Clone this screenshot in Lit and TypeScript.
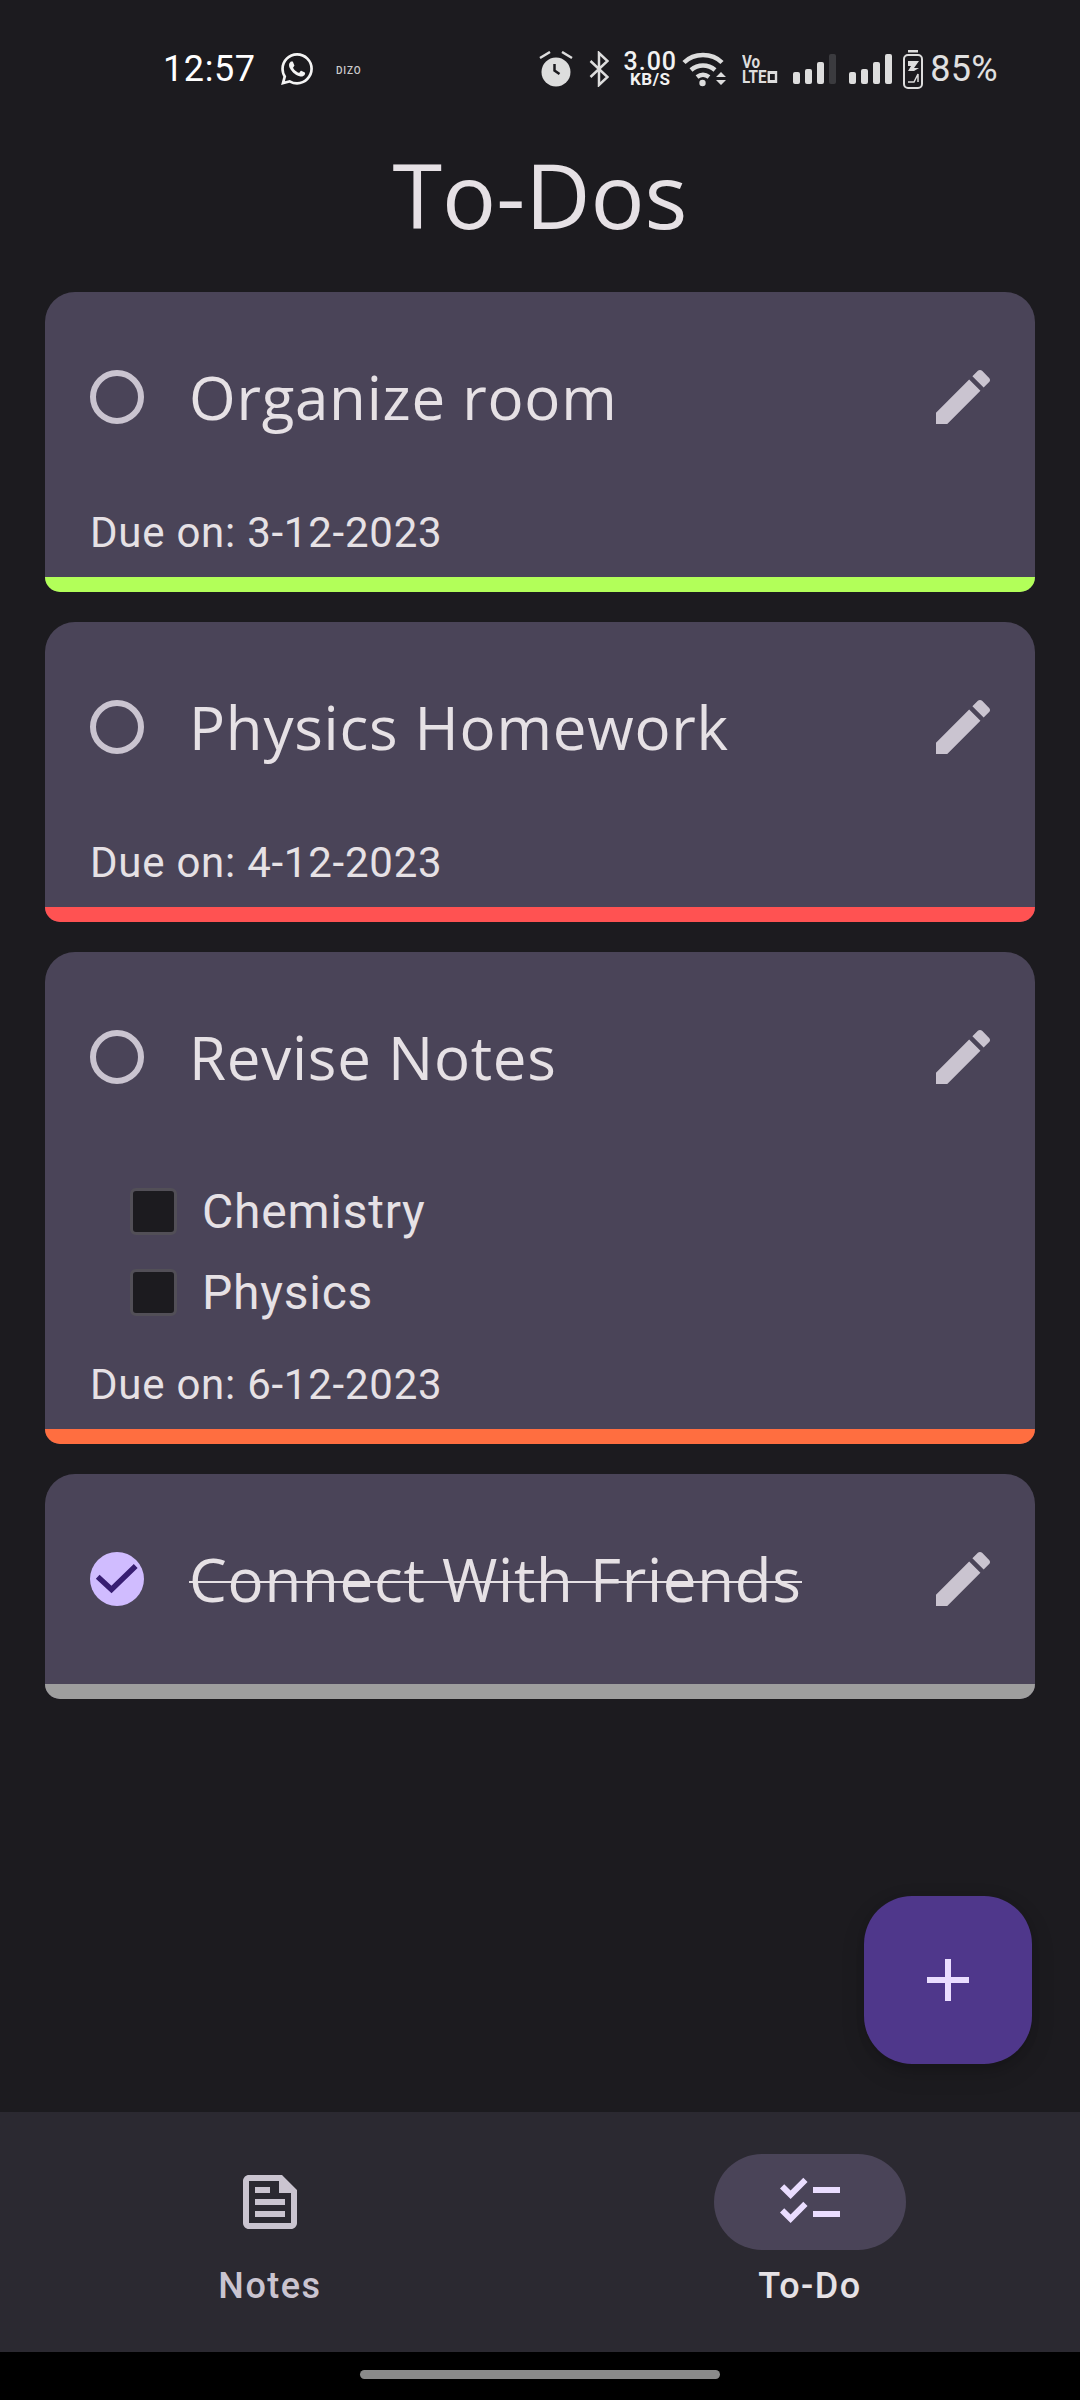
import { LitElement, html, svg, css, nothing } from 'lit';
import { customElement } from 'lit/decorators.js';

interface Todo {
  title: string;
  due?: string;
  color: string;
  done?: boolean;
  subtasks?: string[];
}

const todos: Todo[] = [
  { title: 'Organize room', due: '3-12-2023', color: '#b2ff59' },
  { title: 'Physics Homework', due: '4-12-2023', color: '#ff5252' },
  { title: 'Revise Notes', due: '6-12-2023', color: '#ff6e40', subtasks: ['Chemistry', 'Physics'] },
  { title: 'Connect With Friends', color: '#9e9e9e', done: true },
];

const whatsapp = svg`<path fill="currentColor" d="M17.472 14.382c-.297-.149-1.758-.867-2.03-.967-.273-.099-.471-.148-.67.15-.197.297-.767.966-.94 1.164-.173.199-.347.223-.644.075-.297-.15-1.255-.463-2.39-1.475-.883-.788-1.48-1.761-1.653-2.059-.173-.297-.018-.458.13-.606.134-.133.298-.347.446-.52.149-.174.198-.298.298-.497.099-.198.05-.371-.025-.52-.075-.149-.669-1.612-.916-2.207-.242-.579-.487-.5-.669-.51-.173-.008-.371-.01-.57-.01-.198 0-.52.074-.792.372-.272.297-1.04 1.016-1.04 2.479 0 1.462 1.065 2.875 1.213 3.074.149.198 2.096 3.2 5.077 4.487.709.306 1.262.489 1.694.625.712.227 1.36.195 1.871.118.571-.085 1.758-.719 2.006-1.413.248-.694.248-1.289.173-1.413-.074-.124-.272-.198-.57-.347m-5.421 7.403h-.004a9.87 9.87 0 01-5.031-1.378l-.361-.214-3.741.982.998-3.648-.235-.374a9.86 9.86 0 01-1.51-5.26c.001-5.45 4.436-9.884 9.888-9.884 2.64 0 5.122 1.03 6.988 2.898a9.825 9.825 0 012.893 6.994c-.003 5.45-4.437 9.884-9.885 9.884m8.413-18.297A11.815 11.815 0 0012.05 0C5.495 0 .16 5.335.157 11.892c0 2.096.547 4.142 1.588 5.945L.057 24l6.305-1.654a11.882 11.882 0 005.683 1.448h.005c6.554 0 11.89-5.335 11.893-11.893a11.821 11.821 0 00-3.48-8.413z"/>`;

const signal = (lastDim: boolean) => html`<svg class="signal" viewBox="0 0 43 30" width="43" height="30">
  <rect x="0" y="18" width="7" height="12" rx="2" fill="#ddd"/>
  <rect x="12" y="15" width="7" height="15" rx="2" fill="#ddd"/>
  <rect x="24" y="8" width="7" height="22" rx="2" fill="#ddd"/>
  <rect x="36" y="0" width="7" height="30" rx="2" fill=${lastDim ? '#3b3b3f' : '#ddd'}/>
</svg>`;

@customElement('app-root')
export class AppRoot extends LitElement {
  static styles = css`
    :host {
      display: flex;
      flex-direction: column;
      width: 1080px;
      height: 2400px;
      background: #1c1b1f;
      color: #e6e1e5;
      font-family: Roboto, sans-serif;
      overflow: hidden;
    }

    * {
      box-sizing: border-box;
    }

    svg {
      display: block;
      flex: none;
    }

    /* status bar */
    .status {
      display: flex;
      justify-content: space-between;
      align-items: center;
      height: 42px;
      margin-top: 48px;
      padding: 0 82px 0 163px;
      color: #ddd;
    }
    .status-left,
    .status-right {
      display: flex;
      align-items: center;
    }
    .time {
      font-size: 36px;
      font-weight: 400;
      letter-spacing: 0.6px;
      color: #fff;
      width: 118px;
    }
    .whatsapp {
      color: #f4f4f4;
    }
    .dizo {
      margin-left: 23px;
      margin-top: 3px;
      font-size: 10px;
      font-weight: 500;
      letter-spacing: 0.8px;
      color: #ccc;
    }
    .bt {
      margin-left: 16px;
    }
    .speed {
      margin-left: 16px;
      width: 51px;
      display: flex;
      flex-direction: column;
      align-items: center;
      color: #f2f2f2;
      font-weight: 500;
    }
    .speed b {
      font-size: 25px;
      line-height: 20px;
      font-weight: 500;
      letter-spacing: 1px;
      white-space: nowrap;
    }
    .speed span {
      font-size: 17px;
      line-height: 15px;
      font-weight: 700;
      letter-spacing: 0.5px;
      white-space: nowrap;
    }
    .wifi {
      margin-left: 6px;
    }
    .volte {
      margin-left: 16.5px;
      width: 35px;
      font-weight: 700;
      font-size: 19px;
      line-height: 15px;
      color: #ddd;
    }
    .volte div {
      display: flex;
      align-items: center;
      transform-origin: left center;
      transform: scaleX(0.8);
    }
    .volte i {
      display: block;
      flex: none;
      width: 12px;
      height: 12px;
      margin-left: 1px;
      border: 3px solid #ddd;
    }
    .signal {
      margin-left: 16px;
    }
    .signal + .signal {
      margin-left: 12.5px;
    }
    .battery {
      margin-left: 11px;
    }
    .percent {
      margin-left: 7.5px;
      font-size: 36px;
      letter-spacing: 0.3px;
      color: #e0e0e0;
    }

    /* page */
    main {
      position: relative;
      flex: 1;
      padding: 0 45px;
    }
    h1 {
      margin: 0;
      height: 202px;
      padding-top: 5px;
      display: flex;
      align-items: center;
      justify-content: center;
      font-family: 'Open Sans', sans-serif;
      font-size: 90px;
      font-weight: 400;
      color: #e6e1e5;
    }
    .list {
      display: flex;
      flex-direction: column;
      gap: 30px;
    }

    /* todo card */
    .card {
      background: #4a4458;
      border-radius: 30px 30px 15px 15px;
      overflow: hidden;
    }
    .row {
      display: flex;
      align-items: center;
      height: 210px;
      padding: 0 36px 0 45px;
    }
    .radio {
      flex: none;
      width: 54px;
      height: 54px;
      border: 6px solid #cac4d0;
      border-radius: 50%;
    }
    .title {
      position: relative;
      margin-left: 45px;
      font-family: 'Open Sans', sans-serif;
      font-size: 60px;
      line-height: 80px;
      letter-spacing: 0.75px;
      color: #e6e1e5;
    }
    .title.done::after {
      content: '';
      position: absolute;
      left: 0;
      right: 0;
      top: 42px;
      height: 2px;
      background: #e6e1e5;
    }
    .edit {
      margin-left: auto;
      color: #cac4d0;
    }
    .subtasks {
      padding: 9px 0 21px 85px;
    }
    .subtask {
      display: flex;
      align-items: center;
      height: 81px;
      font-size: 48px;
      letter-spacing: 0.75px;
    }
    .box {
      flex: none;
      width: 47px;
      height: 47px;
      margin-right: 25px;
      background: #1c1b1f;
      border: 3px solid #524f57;
      border-radius: 6px;
    }
    .due {
      height: 75px;
      padding: 0 0 15px 45px;
      display: flex;
      align-items: center;
      font-size: 42px;
      letter-spacing: 0.75px;
    }
    .accent {
      height: 15px;
    }

    /* floating button */
    .fab {
      position: absolute;
      right: 48px;
      bottom: 48px;
      width: 168px;
      height: 168px;
      display: flex;
      align-items: center;
      justify-content: center;
      border-radius: 48px;
      background: #4f378b;
      color: #eaddff;
      box-shadow: 0 9px 24px rgba(0, 0, 0, 0.14), 0 3px 9px rgba(0, 0, 0, 0.1);
    }

    /* bottom navigation */
    nav {
      display: flex;
      height: 240px;
      background: #2b2931;
    }
    .tab {
      flex: 1;
      display: flex;
      flex-direction: column;
      align-items: center;
      padding-top: 42px;
      color: #cac4d0;
    }
    .pill {
      width: 192px;
      height: 96px;
      display: flex;
      align-items: center;
      justify-content: center;
      border-radius: 48px;
    }
    .tab.active {
      color: #e6e1e5;
    }
    .tab.active .pill {
      background: #4a4458;
      color: #eaddff;
    }
    .label {
      margin-top: 12px;
      font-size: 36px;
      line-height: 48px;
      font-weight: 500;
      letter-spacing: 1.5px;
    }

    /* gesture area */
    .gesture {
      height: 48px;
      padding-top: 18px;
      background: #000;
    }
    .gesture div {
      width: 360px;
      height: 9px;
      margin: 0 auto;
      border-radius: 5px;
      background: #8a8a8a;
    }
  `;

  renderStatus() {
    return html`
      <div class="status">
        <div class="status-left">
          <span class="time">12:57</span>
          <svg class="whatsapp" viewBox="0 0 24 24" width="32" height="32">${whatsapp}</svg>
          <span class="dizo">DIZO</span>
        </div>
        <div class="status-right">
          <svg class="alarm" viewBox="0 0 34 36" width="34" height="36">
            <circle cx="17" cy="21" r="14.5" fill="#ddd"/>
            <path d="M15.5 13v6.5l5 3.5" fill="none" stroke="#1c1b1f" stroke-width="2.5"/>
            <path d="M1 7l10-6M33 7L23 1" fill="none" stroke="#ddd" stroke-width="2.5"/>
          </svg>
          <svg class="bt" viewBox="0 0 20 36" width="20" height="36">
            <path d="M1.5 10l17 16-8.500 8V2l8.500 8-17 16" fill="none" stroke="#ddd" stroke-width="2.500"/>
          </svg>
          <div class="speed"><b>3.00</b><span>KB/S</span></div>
          <svg class="wifi" viewBox="0 0 44 36" width="44" height="36">
            <path d="M2 11.500C12 1.500 30 1.500 40 11.500M9 19c7-6 17-6 24 0M15 26c4-3 8-3 12 0" fill="none" stroke="#ddd" stroke-width="4.500"/>
            <circle cx="20.500" cy="32" r="3.200" fill="#ddd"/>
            <path d="M34 26l5-5 5 5zM34 29l5 5 5-5z" fill="#ddd"/>
          </svg>
          <div class="volte">
            <div>Vo</div>
            <div>LTE<i></i></div>
          </div>
          ${signal(true)}
          ${signal(false)}
          <svg class="battery" viewBox="0 0 20 39" width="20" height="39">
            <path d="M5 0h10v2.500H5z" fill="#ddd"/>
            <rect x="1" y="5" width="18" height="33" rx="4" fill="none" stroke="#ddd" stroke-width="2"/>
            <path d="M5 11h11l-5 7h5l-5 3H5l3-5H5z" fill="#ddd"/>
            <path d="M5 32h6l4-8v8" fill="none" stroke="#ddd" stroke-width="1.500"/>
          </svg>
          <span class="percent">85%</span>
        </div>
      </div>
    `;
  }

  renderCheck() {
    return html`<svg viewBox="0 0 54 54" width="54" height="54">
      <circle cx="27" cy="27" r="27" fill="#d0bcff"/>
      <path d="M7.700 24.700L21.500 37.400 45.700 14" fill="none" stroke="#381e72" stroke-width="5.500"/>
    </svg>`;
  }

  renderTodo(todo: Todo) {
    return html`
      <div class="card">
        <div class="row">
          ${todo.done ? this.renderCheck() : html`<div class="radio"></div>`}
          <span class="title ${todo.done ? 'done' : ''}">${todo.title}</span>
          <svg class="edit" viewBox="0 0 24 24" width="72" height="72">
            <path fill="currentColor" d="M3 17.250V21h3.750L17.810 9.940l-3.750-3.750L3 17.250zM20.710 7.040c.39-.39.39-1.020 0-1.410l-2.340-2.340c-.39-.39-1.020-.39-1.410 0l-1.830 1.830 3.750 3.750 1.830-1.830z"/>
          </svg>
        </div>
        ${todo.subtasks
          ? html`<div class="subtasks">
              ${todo.subtasks.map((s) => html`<div class="subtask"><div class="box"></div>${s}</div>`)}
            </div>`
          : nothing}
        ${todo.due ? html`<div class="due">Due on: ${todo.due}</div>` : nothing}
        <div class="accent" style="background:${todo.color}"></div>
      </div>
    `;
  }

  render() {
    return html`
      ${this.renderStatus()}
      <main>
        <h1>To-Dos</h1>
        <div class="list">${todos.map((t) => this.renderTodo(t))}</div>
        <div class="fab">
          <svg viewBox="0 0 42 42" width="42" height="42"><path fill="currentColor" d="M18 0h6v18h18v6H24v18h-6V24H0v-6h18z"/></svg>
        </div>
      </main>
      <nav>
        <div class="tab">
          <div class="pill">
            <svg viewBox="0 0 24 24" width="72" height="72">
              <path fill="currentColor" d="M16 3H5c-1.100 0-2 .9-2 2v14c0 1.100.9 2 2 2h14c1.100 0 2-.9 2-2V8l-5-5zm3 16H5V5h10v4h4v10zM7 17h10v-2H7v2zm5-10H7v2h5V7zm-5 6h10v-2H7v2z"/>
            </svg>
          </div>
          <span class="label">Notes</span>
        </div>
        <div class="tab active">
          <div class="pill">
            <svg viewBox="0 0 24 24" width="72" height="72">
              <path fill="currentColor" d="M22 7h-9v2h9V7zm0 8h-9v2h9v-2zM5.540 11 2 7.460l1.410-1.410 2.120 2.120 4.240-4.240 1.410 1.410L5.540 11zm0 8L2 15.460l1.410-1.410 2.120 2.120 4.240-4.240 1.410 1.410L5.540 19z"/>
            </svg>
          </div>
          <span class="label">To-Do</span>
        </div>
      </nav>
      <div class="gesture"><div></div></div>
    `;
  }
}
